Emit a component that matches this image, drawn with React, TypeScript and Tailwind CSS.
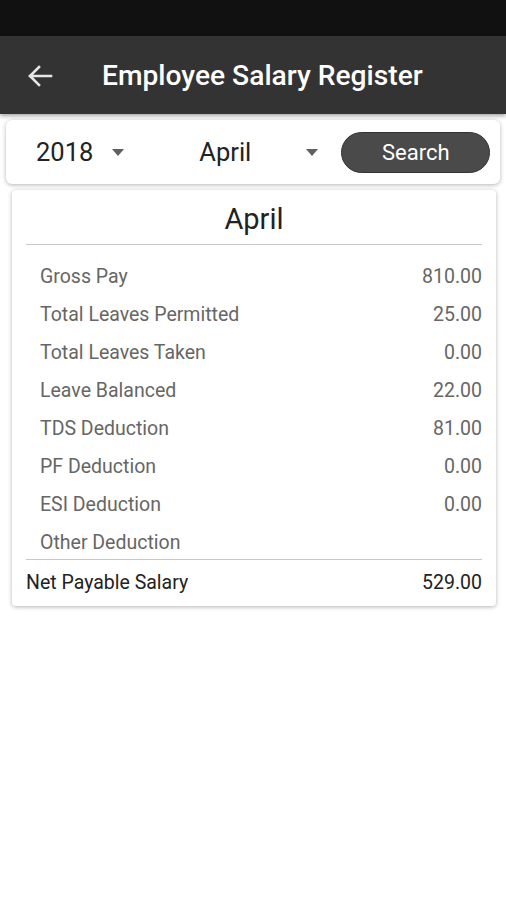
import React from "react";

const rows: [string, string][] = [
  ["Gross Pay", "810.00"],
  ["Total Leaves Permitted", "25.00"],
  ["Total Leaves Taken", "0.00"],
  ["Leave Balanced", "22.00"],
  ["TDS Deduction", "81.00"],
  ["PF Deduction", "0.00"],
  ["ESI Deduction", "0.00"],
  ["Other Deduction", ""],
];

function Caret() {
  return (
    <svg width="12" height="7" viewBox="0 0 12 7" className="shrink-0">
      <path d="M0 0 L12 0 L6 7 Z" fill="#5f5f5f" />
    </svg>
  );
}

export default function App() {
  return (
    <div className="w-[506px] h-[900px] bg-white flex flex-col" style={{ fontFamily: "Roboto, 'Noto Sans', sans-serif" }}>
      <div className="h-[36px] bg-[#111111]" />
      <div className="h-[78px] pt-[2px] bg-[#333333] flex items-center shadow-[0_2px_4px_rgba(0,0,0,0.35)]">
        <svg width="26" height="22" viewBox="0 0 26 22" className="ml-[27px]">
          <path d="M24 11 H3 M12 2 L3 11 L12 20" stroke="#e6e6e6" strokeWidth="2.6" fill="none" strokeLinecap="square" />
        </svg>
        <div className="ml-[49px] text-white text-[28.2px] font-medium">Employee Salary Register</div>
      </div>
      <div className="mx-[6px] mt-[6px] h-[64px] rounded-[6px] bg-white shadow-[0_1px_4px_rgba(0,0,0,0.3)] flex items-center">
        <div className="ml-[30px] text-[25.5px] text-[#222]">2018</div>
        <div className="ml-[19px]"><Caret /></div>
        <div className="ml-[75px] text-[25.5px] text-[#222]">April</div>
        <div className="ml-[55px]"><Caret /></div>
        <div className="ml-[23px] w-[149px] h-[41px] rounded-full bg-[#4a4a4a] border border-[#333] text-white text-[22px] flex items-center justify-center">Search</div>
      </div>
      <div className="ml-[12px] mr-[10px] mt-[6px] rounded-[4px] bg-white shadow-[0_1px_4px_rgba(0,0,0,0.3)] px-[14px]">
        <div className="h-[55px] pt-[6px] flex items-center justify-center text-[29px] text-[#222] border-b border-[#c8c8c8]">April</div>
        <div className="pt-[10px]">
          {rows.map(([l, v]) => (
            <div key={l} className="h-[38px] pt-[5px] flex items-center justify-between pl-[14px] text-[19.5px] text-[#666]">
              <span>{l}</span>
              <span>{v}</span>
            </div>
          ))}
        </div>
        <div className="border-t border-[#c8c8c8] h-[47px] flex items-center justify-between text-[19.5px] text-[#222]">
          <span>Net Payable Salary</span>
          <span>529.00</span>
        </div>
      </div>
    </div>
  );
}
